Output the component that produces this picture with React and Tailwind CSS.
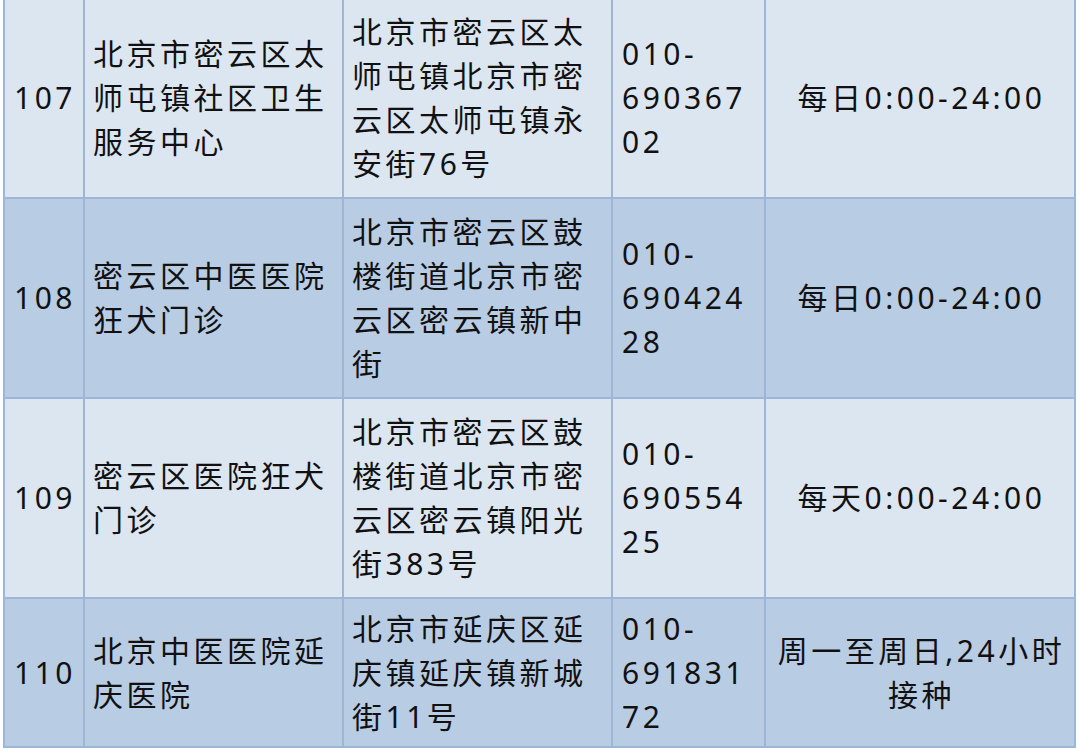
const rows = [
  {
    no: "107",
    name: "北京市密云区太师屯镇社区卫生服务中心",
    addr: "北京市密云区太师屯镇北京市密云区太师屯镇永安街76号",
    phone: "010-\u200B69036702",
    time: "每日0:00-24:00",
    light: true,
  },
  {
    no: "108",
    name: "密云区中医医院狂犬门诊",
    addr: "北京市密云区鼓楼街道北京市密云区密云镇新中街",
    phone: "010-\u200B69042428",
    time: "每日0:00-24:00",
    light: false,
  },
  {
    no: "109",
    name: "密云区医院狂犬门诊",
    addr: "北京市密云区鼓楼街道北京市密云区密云镇阳光街383号",
    phone: "010-\u200B69055425",
    time: "每天0:00-24:00",
    light: true,
  },
  {
    no: "110",
    name: "北京中医医院延庆医院",
    addr: "北京市延庆区延庆镇延庆镇新城街11号",
    phone: "010-\u200B69183172",
    time: "周一至周日,24小时接种",
    light: false,
  },
];

export default function App() {
  return (
    <div
      className="w-[1080px] h-[751px] overflow-hidden bg-white"
      style={{ fontFamily: '"Noto Sans", "Noto Sans CJK SC", sans-serif' }}
    >
      <div className="ml-[3px] -mt-[3px] w-fit bg-[#9db6d7] p-[2px] grid grid-cols-[78px_257px_267px_151px_308px] grid-rows-[198px_198px_198px_147px] gap-[2px] text-[30px] leading-[44px] tracking-[3.5px] text-[#111111]">
        {rows.map((r) => {
          const bg = r.light ? "bg-[#dce6f1]" : "bg-[#b8cce4]";
          return [
            <div key={r.no + "a"} className={`${bg} flex items-center justify-center pl-[2px]`}>
              {r.no}
            </div>,
            <div key={r.no + "b"} className={`${bg} flex items-center pl-[8px] pr-[6px]`}>
              <div>{r.name}</div>
            </div>,
            <div key={r.no + "c"} className={`${bg} flex items-center pl-[8px] pr-[6px]`}>
              <div>{r.addr}</div>
            </div>,
            <div key={r.no + "d"} className={`${bg} flex items-center pl-[9px] pr-[8px]`}>
              <div className="min-w-0 break-words">{r.phone}</div>
            </div>,
            <div key={r.no + "e"} className={`${bg} flex items-center justify-center text-center px-[6px]`}>
              <div className="pl-[3px]">{r.time}</div>
            </div>,
          ];
        })}
      </div>
    </div>
  );
}
